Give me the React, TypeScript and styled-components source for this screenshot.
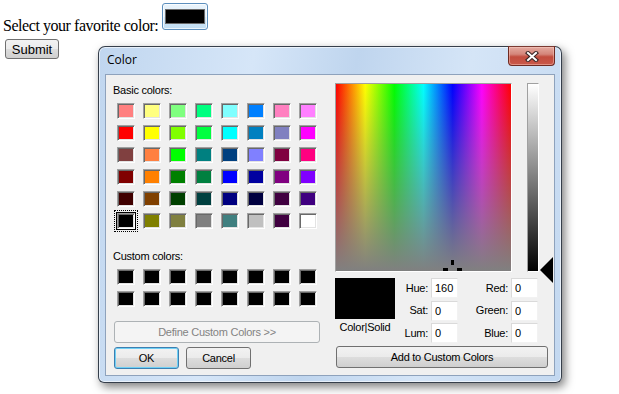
import { Fragment } from 'react';
import styled, { createGlobalStyle, css } from 'styled-components';

const basicColors = [
  '#ff8080', '#ffff80', '#80ff80', '#00ff80', '#80ffff', '#0080ff', '#ff80c0', '#ff80ff',
  '#ff0000', '#ffff00', '#80ff00', '#00ff40', '#00ffff', '#0080c0', '#8080c0', '#ff00ff',
  '#804040', '#ff8040', '#00ff00', '#008080', '#004080', '#8080ff', '#800040', '#ff0080',
  '#800000', '#ff8000', '#008000', '#008040', '#0000ff', '#0000a0', '#800080', '#8000ff',
  '#400000', '#804000', '#004000', '#004040', '#000080', '#000040', '#400040', '#400080',
  '#000000', '#808000', '#808040', '#808080', '#408080', '#c0c0c0', '#400040', '#ffffff',
];

const customColors = Array.from({ length: 16 }, () => '#000000');

const fields = [
  { label: 'Hue:', value: '160', label2: 'Red:', value2: '0' },
  { label: 'Sat:', value: '0', label2: 'Green:', value2: '0' },
  { label: 'Lum:', value: '0', label2: 'Blue:', value2: '0' },
];

const App = () => {
  return (
    <>
      <GlobalStyle />
      <Page>
        <PromptRow>
          <PromptLabel>Select your favorite color:</PromptLabel>
          <ColorInput type="button">
            <ColorChip />
          </ColorInput>
        </PromptRow>
        <SubmitButton type="button">Submit</SubmitButton>

        <DialogWindow>
          <TitleBar>
            <TitleText>Color</TitleText>
            <CloseButton type="button" aria-label="Close">
              <svg width="14" height="11" viewBox="0 0 14 11">
                <path d="M3 2 L11 9 M11 2 L3 9" stroke="#3b2626" strokeWidth="4.2" strokeLinecap="square" />
                <path d="M3 2 L11 9 M11 2 L3 9" stroke="#ffffff" strokeWidth="2" strokeLinecap="square" />
              </svg>
            </CloseButton>
          </TitleBar>
          <FrameBody>
            <ClientArea>
              <LeftPanel>
                <SectionLabel>Basic colors:</SectionLabel>
                <SwatchGrid>
                  {basicColors.map((c, i) => (
                    <Swatch key={i} $color={c} $selected={i === 40} />
                  ))}
                </SwatchGrid>
                <SectionLabel $gap={21}>Custom colors:</SectionLabel>
                <SwatchGrid>
                  {customColors.map((c, i) => (
                    <Swatch key={i} $color={c} />
                  ))}
                </SwatchGrid>
                <DefineButton type="button" disabled>
                  Define Custom Colors &gt;&gt;
                </DefineButton>
                <ButtonRow>
                  <DialogButton type="button" $default>
                    OK
                  </DialogButton>
                  <DialogButton type="button">Cancel</DialogButton>
                </ButtonRow>
              </LeftPanel>

              <RightPanel>
                <PickerRow>
                  <Spectrum>
                    <Crosshair width="19" height="19" viewBox="0 0 19 19">
                      <rect x="8" y="0" width="3" height="5" />
                      <rect x="8" y="14" width="3" height="5" />
                      <rect x="0" y="8" width="5" height="3" />
                      <rect x="14" y="8" width="5" height="3" />
                    </Crosshair>
                  </Spectrum>
                  <LumBar />
                  <ArrowTrack>
                    <LumArrow width="13" height="26" viewBox="0 0 13 26">
                      <polygon points="0,13 13,0 13,26" fill="#000" />
                    </LumArrow>
                  </ArrowTrack>
                </PickerRow>

                <BottomRow>
                  <PreviewColumn>
                    <Preview />
                    <PreviewLabel>Color|Solid</PreviewLabel>
                  </PreviewColumn>
                  <FieldGrid>
                    {fields.map((f) => (
                      <Fragment key={f.label}>
                        <FieldLabel>{f.label}</FieldLabel>
                        <FieldInput defaultValue={f.value} />
                        <FieldLabel>{f.label2}</FieldLabel>
                        <FieldInput defaultValue={f.value2} />
                      </Fragment>
                    ))}
                  </FieldGrid>
                </BottomRow>

                <AddButton type="button">Add to Custom Colors</AddButton>
              </RightPanel>
            </ClientArea>
          </FrameBody>
        </DialogWindow>
      </Page>
    </>
  );
};

export default App;

const GlobalStyle = createGlobalStyle`
  body {
    margin: 0;
    background: #ffffff;
  }
`;

const Page = styled.div`
  position: relative;
  width: 619px;
  height: 394px;
  box-sizing: border-box;
  padding: 3px 0 0 3px;
  overflow: hidden;
  font-family: 'Liberation Serif', 'Times New Roman', serif;
`;

const PromptRow = styled.div`
  display: flex;
  align-items: flex-start;
`;

const PromptLabel = styled.span`
  margin-top: 14px;
  margin-right: 4px;
  font-size: 16px;
  line-height: 18px;
  letter-spacing: -0.45px;
  color: #000;
`;

const ColorInput = styled.button`
  display: flex;
  align-items: center;
  justify-content: center;
  width: 46px;
  height: 27px;
  padding: 0;
  box-sizing: border-box;
  border: 1px solid #5d8fbd;
  border-radius: 3px;
  background: linear-gradient(#eaf4fb 0%, #dfeef9 50%, #cde5f6 51%, #c2def3 100%);
  box-shadow: inset 0 0 0 1px rgba(255, 255, 255, 0.7);
`;

const ColorChip = styled.span`
  display: block;
  width: 40px;
  height: 15px;
  box-sizing: border-box;
  border: 1px solid #6a6a6a;
  background: #000;
`;

const SubmitButton = styled.button`
  display: block;
  margin: 4px 0 0 2px;
  width: 54px;
  height: 20px;
  padding: 0;
  box-sizing: border-box;
  border: 1px solid #707070;
  border-radius: 3px;
  background: linear-gradient(#f2f2f2 0%, #ebebeb 50%, #dddddd 51%, #cfcfcf 100%);
  font-family: 'Liberation Sans', Arial, sans-serif;
  font-size: 13px;
  color: #000;
`;

const DialogWindow = styled.div`
  position: absolute;
  left: 98px;
  top: 46px;
  width: 464px;
  height: 337px;
  box-sizing: border-box;
  display: flex;
  flex-direction: column;
  border: 1px solid rgba(38, 46, 56, 0.9);
  border-radius: 7px 7px 6px 6px;
  background: linear-gradient(100deg, #c0d6ef 0%, #d6e6f8 30%, #bfd5ee 50%, #d5e5f7 72%, #c3d8f0 100%);
  box-shadow: inset 0 0 0 1px rgba(255, 255, 255, 0.6), 3px 4px 10px rgba(0, 0, 0, 0.5);
  font-family: 'Liberation Sans', Arial, sans-serif;
  font-size: 11px;
  letter-spacing: -0.25px;
  color: #000;
`;

const TitleBar = styled.div`
  display: flex;
  align-items: flex-start;
  height: 27px;
  flex-shrink: 0;
  padding-left: 8px;
`;

const TitleText = styled.span`
  padding-top: 5px;
  font-family: 'Open Sans', 'Noto Sans', sans-serif;
  font-size: 12px;
  line-height: 16px;
  letter-spacing: 0;
  color: #000;
`;

const CloseButton = styled.button`
  display: flex;
  align-items: center;
  justify-content: center;
  margin: -1px 6px 0 auto;
  width: 47px;
  height: 20px;
  padding: 0;
  box-sizing: border-box;
  border: 1px solid #6e2a22;
  border-top-color: #7a3a32;
  border-radius: 0 0 4px 4px;
  background: linear-gradient(#e4aaa0 0%, #d4857a 40%, #c24c3e 55%, #c9594a 100%);
  box-shadow: inset 0 0 0 1px rgba(255, 210, 200, 0.45);
`;

const FrameBody = styled.div`
  flex: 1;
  padding: 0 6px 6px;
  display: flex;
`;

const ClientArea = styled.div`
  flex: 1;
  display: flex;
  border: 1px solid #8ea2bc;
  background: #f0f0f0;
`;

const LeftPanel = styled.div`
  width: 229px;
  display: flex;
  flex-direction: column;
  align-items: flex-start;
  padding: 9px 0 0 7px;
  box-sizing: border-box;
`;

const SectionLabel = styled.div<{ $gap?: number }>`
  margin-top: ${(p) => p.$gap ?? 0}px;
  line-height: 13px;
`;

const SwatchGrid = styled.div`
  display: grid;
  grid-template-columns: repeat(8, 18px);
  grid-auto-rows: 16px;
  column-gap: 8px;
  row-gap: 6px;
  margin: 6px 0 0 4px;
`;

const Swatch = styled.div<{ $color: string; $selected?: boolean }>`
  box-sizing: border-box;
  background: ${(p) => p.$color};
  border: 1px solid;
  border-color: #a0a0a0 #ffffff #ffffff #a0a0a0;
  box-shadow: inset 1px 1px 0 #696969, inset -1px -1px 0 #e3e3e3;
  ${(p) =>
    p.$selected &&
    css`
      box-shadow: inset 1px 1px 0 #696969, inset -1px -1px 0 #e3e3e3, 0 0 0 1px #000;
      outline: 1px dotted #000;
      outline-offset: 2px;
    `}
`;

const buttonBase = css`
  height: 22px;
  padding: 0;
  box-sizing: border-box;
  border: 1px solid #707070;
  border-radius: 3px;
  background: linear-gradient(#f2f2f2 0%, #ebebeb 50%, #dddddd 51%, #cfcfcf 100%);
  font-family: inherit;
  font-size: 11px;
  letter-spacing: -0.25px;
  color: #000;
`;

const DefineButton = styled.button`
  ${buttonBase};
  margin: 14px 0 0 1px;
  width: 206px;
  border-color: #adb2b5;
  background: #f4f4f4;
  color: #838383;
`;

const ButtonRow = styled.div`
  display: flex;
  gap: 7px;
  margin: 4px 0 0 1px;
`;

const DialogButton = styled.button<{ $default?: boolean }>`
  ${buttonBase};
  width: 65px;
  ${(p) =>
    p.$default &&
    css`
      border-color: #3c7fb1;
      box-shadow: inset 0 0 0 1px #6fd0f5;
    `}
`;

const RightPanel = styled.div`
  display: flex;
  flex-direction: column;
  align-items: flex-start;
  padding-top: 8px;
`;

const PickerRow = styled.div`
  display: flex;
  align-items: flex-start;
`;

const Spectrum = styled.div`
  position: relative;
  width: 177px;
  height: 189px;
  box-sizing: border-box;
  border: 1px solid;
  border-color: #a0a0a0 #ffffff #ffffff #a0a0a0;
  overflow: hidden;
  background: linear-gradient(to bottom, rgba(128, 128, 128, 0), #808080),
    linear-gradient(to right, #ff0000, #ffff00, #00ff00, #00ffff, #0000ff, #ff00ff, #ff0000);
`;

const Crosshair = styled.svg`
  position: absolute;
  left: 107px;
  top: 176px;
  fill: #000;
`;

const LumBar = styled.div`
  margin-left: 15px;
  width: 12px;
  height: 189px;
  box-sizing: border-box;
  border: 1px solid;
  border-color: #a0a0a0 #ffffff #ffffff #a0a0a0;
  background: linear-gradient(#ffffff, #000000);
`;

const ArrowTrack = styled.div`
  position: relative;
  width: 14px;
  height: 189px;
  margin-left: 1px;
`;

const LumArrow = styled.svg`
  position: absolute;
  left: 0;
  top: 174px;
`;

const BottomRow = styled.div`
  display: flex;
  align-items: flex-start;
  margin-top: 6px;
`;

const PreviewColumn = styled.div`
  width: 60px;
  display: flex;
  flex-direction: column;
  align-items: center;
`;

const Preview = styled.div`
  width: 60px;
  height: 41px;
  background: #000;
`;

const PreviewLabel = styled.div`
  margin-top: 2px;
  line-height: 13px;
  white-space: nowrap;
`;

const FieldGrid = styled.div`
  display: grid;
  grid-template-columns: 33px 27px 47px 27px;
  grid-auto-rows: 20px;
  column-gap: 3px;
  row-gap: 2.5px;
  align-items: center;
`;

const FieldLabel = styled.span`
  text-align: right;
  line-height: 13px;
`;

const FieldInput = styled.input`
  width: 27px;
  height: 20px;
  box-sizing: border-box;
  padding: 0 0 0 3px;
  border: 1px solid;
  border-color: #dadada #f2f2f2 #f2f2f2 #dadada;
  background: #ffffff;
  font-family: inherit;
  font-size: 11px;
  color: #000;
  outline: none;
`;

const AddButton = styled.button`
  ${buttonBase};
  margin: 3px 0 0 1px;
  width: 212px;
`;
